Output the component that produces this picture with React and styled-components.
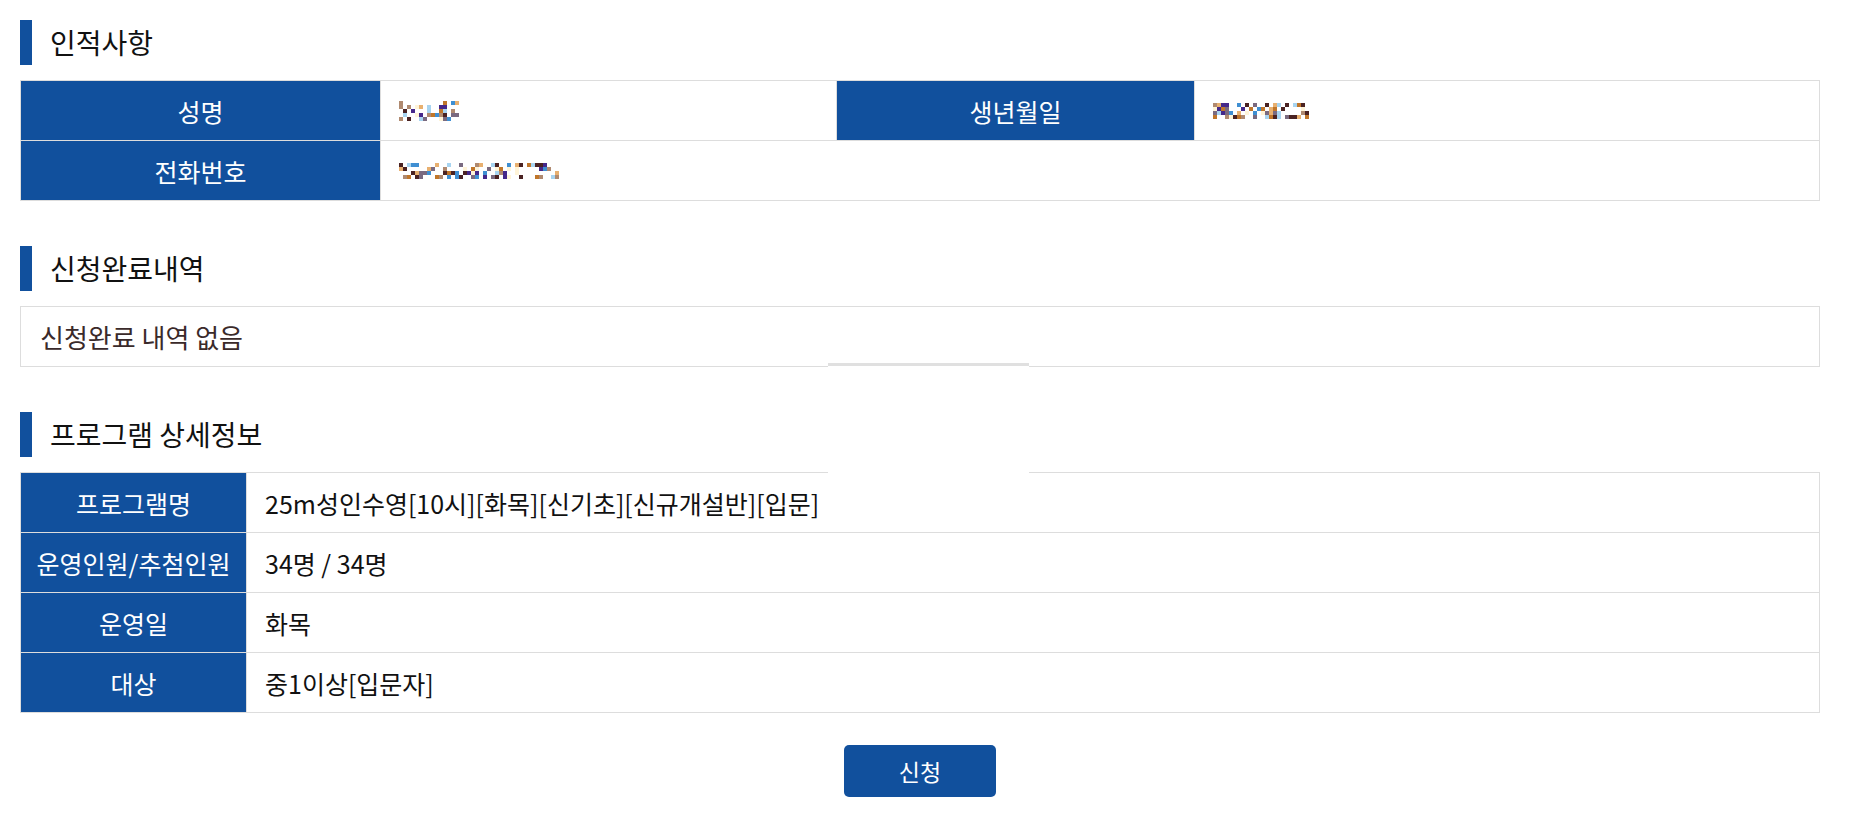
import styled, { createGlobalStyle } from 'styled-components';

const GlobalStyle = createGlobalStyle`
    body {
        margin: 0;
        background: #FFFFFF;
        font-family: "Noto Sans CJK KR", "Noto Sans", sans-serif;
    }
`

const BLUE = '#11509d';
const LINE = '#dddddd';

const Page = styled.div`
    position: relative;
    width: 1800px;
    padding: 20px 0 34px 20px;
`
const Section = styled.section`
    margin-bottom: 45px;
`
const Heading = styled.div`
    display: flex;
    align-items: center;
    height: 45px;
    margin-bottom: 15px;
    &::before {
        content: '';
        flex: none;
        width: 12px;
        height: 45px;
        background: ${BLUE};
    }
`
const HeadingText = styled.h2`
    margin: 0 0 0 18px;
    font-size: 28px;
    line-height: 45px;
    font-weight: 400;
    color: #111111;
`
const Table = styled.div`
    display: grid;
    grid-template-columns: ${(p) => p.$cols};
    border-top: 1px solid ${LINE};
    border-left: 1px solid ${LINE};
`
const Label = styled.div`
    display: flex;
    align-items: center;
    justify-content: center;
    height: 60px;
    box-sizing: border-box;
    background: ${BLUE};
    color: #FFFFFF;
    font-size: 25px;
    white-space: nowrap;
    border-right: 1px solid ${LINE};
    border-bottom: 1px solid ${LINE};
`
const Value = styled.div`
    display: flex;
    align-items: center;
    height: 60px;
    box-sizing: border-box;
    padding: 0 18px;
    font-size: 25px;
    color: #111111;
    border-right: 1px solid ${LINE};
    border-bottom: 1px solid ${LINE};
    grid-column: ${(p) => p.$span ? `span ${p.$span}` : 'auto'};
`
const EmptyBox = styled.div`
    display: flex;
    align-items: center;
    height: 61px;
    box-sizing: border-box;
    padding: 0 19px;
    border: 1px solid ${LINE};
    font-size: 26px;
    color: #3a2a2a;
`
const Actions = styled.div`
    display: flex;
    justify-content: center;
    margin-top: -13px;
`
const Button = styled.button`
    width: 152px;
    height: 52px;
    border: none;
    border-radius: 5px;
    background: ${BLUE};
    color: #FFFFFF;
    font-family: inherit;
    font-size: 23px;
`
const Overlay = styled.div`
    position: absolute;
    left: 828px;
    top: 363px;
    width: 201px;
    height: 107px;
    background: #FFFFFF;
    border-top: 3px solid #e0e0e0;
`

const PALETTE = ['#4a2222', '#e8b070', '#a8d4f0', '#3f8fd2', '#45288a', '#c0762a', '#fff4d8', '#b08a70', '#7a6a80'];

function Mosaic({ cols, rows, seed, size = 4 }) {
    const cells = [];
    let s = seed;
    for (let c = 0; c < cols; c++) {
        for (let r = 0; r < rows; r++) {
            s = (s * 9301 + 49297) % 233280;
            const v = s / 233280;
            if (v < 0.45) continue;
            const color = PALETTE[Math.floor(((v - 0.45) / 0.55) * PALETTE.length) % PALETTE.length];
            cells.push(<rect key={c + '-' + r} x={c * size} y={r * size} width={size} height={size} fill={color} />);
        }
    }
    return (
        <svg width={cols * size} height={rows * size} viewBox={`0 0 ${cols * size} ${rows * size}`}>
            {cells}
        </svg>
    );
}

export default function App() {
    return (
        <Page>
            <GlobalStyle />
            <Section>
                <Heading><HeadingText>인적사항</HeadingText></Heading>
                <Table $cols="360px 456px 358px 625px">
                    <Label>성명</Label>
                    <Value><Mosaic cols={15} rows={5} seed={17} /></Value>
                    <Label>생년월일</Label>
                    <Value><Mosaic cols={24} rows={4} seed={42} /></Value>
                    <Label>전화번호</Label>
                    <Value $span={3}><Mosaic cols={40} rows={4} seed={7} /></Value>
                </Table>
            </Section>

            <Section>
                <Heading><HeadingText>신청완료내역</HeadingText></Heading>
                <EmptyBox>신청완료 내역 없음</EmptyBox>
            </Section>

            <Section>
                <Heading><HeadingText>프로그램 상세정보</HeadingText></Heading>
                <Table $cols="226px 1573px">
                    <Label>프로그램명</Label>
                    <Value>25m성인수영[10시][화목][신기초][신규개설반][입문]</Value>
                    <Label>운영인원/추첨인원</Label>
                    <Value>34명 / 34명</Value>
                    <Label>운영일</Label>
                    <Value>화목</Value>
                    <Label>대상</Label>
                    <Value>중1이상[입문자]</Value>
                </Table>
            </Section>

            <Actions>
                <Button type="button">신청</Button>
            </Actions>

            <Overlay />
        </Page>
    );
}
